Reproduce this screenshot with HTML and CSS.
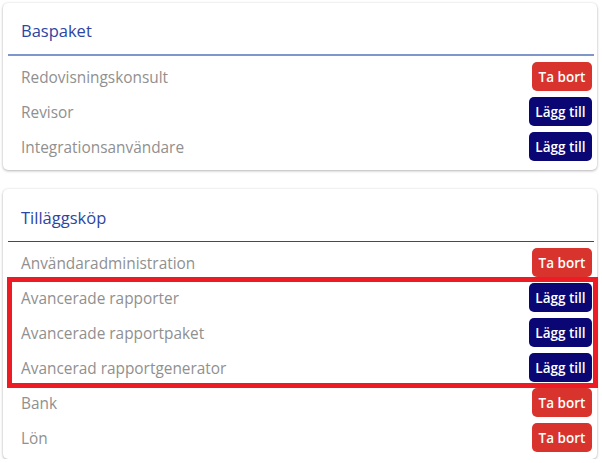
FILE: index.html
```html
<!DOCTYPE html>
<html lang="sv">
<head>
<meta charset="utf-8">
<title>Paket</title>
<link rel="stylesheet" href="styles.css">
</head>
<body>
<div class="page">
  <section class="card">
    <header class="card-head card-head--light"><h2 class="card-title">Baspaket</h2></header>
    <div class="rows">
      <div class="row"><span class="row-label">Redovisningskonsult</span><button class="btn btn--remove">Ta bort</button></div>
      <div class="row"><span class="row-label">Revisor</span><button class="btn btn--add">Lägg till</button></div>
      <div class="row"><span class="row-label">Integrationsanvändare</span><button class="btn btn--add">Lägg till</button></div>
    </div>
  </section>
  <section class="card card--last">
    <header class="card-head card-head--dark"><h2 class="card-title">Tilläggsköp</h2></header>
    <div class="rows">
      <div class="row"><span class="row-label">Användaradministration</span><button class="btn btn--remove">Ta bort</button></div>
      <div class="highlight">
        <div class="row"><span class="row-label">Avancerade rapporter</span><button class="btn btn--add">Lägg till</button></div>
        <div class="row"><span class="row-label">Avancerade rapportpaket</span><button class="btn btn--add">Lägg till</button></div>
        <div class="row"><span class="row-label">Avancerad rapportgenerator</span><button class="btn btn--add">Lägg till</button></div>
      </div>
      <div class="row"><span class="row-label">Bank</span><button class="btn btn--remove">Ta bort</button></div>
      <div class="row"><span class="row-label">Lön</span><button class="btn btn--remove">Ta bort</button></div>
    </div>
  </section>
</div>
</body>
</html>
```

FILE: styles.css
```css
* { box-sizing: border-box; }
html, body { margin: 0; padding: 0; background: #ffffff; }
body { font-family: "Open Sans", "Noto Sans", sans-serif; }
.page {
  padding: 3px 5px 0 3px;
  display: flex;
  flex-direction: column;
  gap: 19px;
}
.card {
  background: #fff;
  border-radius: 5px;
  box-shadow: 0 1px 3px rgba(0,0,0,0.28), 0 0 2px rgba(0,0,0,0.08);
  padding: 0 3px 6px 5px;
}
.card--last { padding-bottom: 4px; }
.card-head {
  display: flex;
  align-items: center;
  padding: 4px 13px 0;
}
.card-head--light { border-bottom: 2px solid #7f96cb; height: 53px; }
.card-head--dark { border-bottom: 1px solid #2c4a8e; height: 53px; }
.card-title {
  margin: 0;
  font-size: 16.5px;
  font-weight: 500;
  color: #2b46a3;
}
.rows { padding-top: 3px; display: flex; flex-direction: column; }
.row {
  height: 35px;
  display: flex;
  align-items: center;
  justify-content: space-between;
  padding: 0 2px 0 13px;
}
.row-label { font-size: 15.4px; color: #909090; padding-top: 2px; }
.btn {
  border: none;
  border-radius: 5px;
  height: 29px;
  color: #fff;
  font-family: "Open Sans", "Noto Sans", sans-serif;
  font-weight: 600;
  font-size: 13.5px;
  padding: 0;
  cursor: pointer;
}
.btn--remove { background: #d8332c; width: 60px; }
.btn--add { background: #0a0774; width: 63px; }
.highlight { position: relative; }
.highlight::after {
  content: "";
  position: absolute;
  top: -3px;
  bottom: -3px;
  left: -1px;
  right: -4px;
  border: 5px solid #ec1b24;
  pointer-events: none;
}
```
